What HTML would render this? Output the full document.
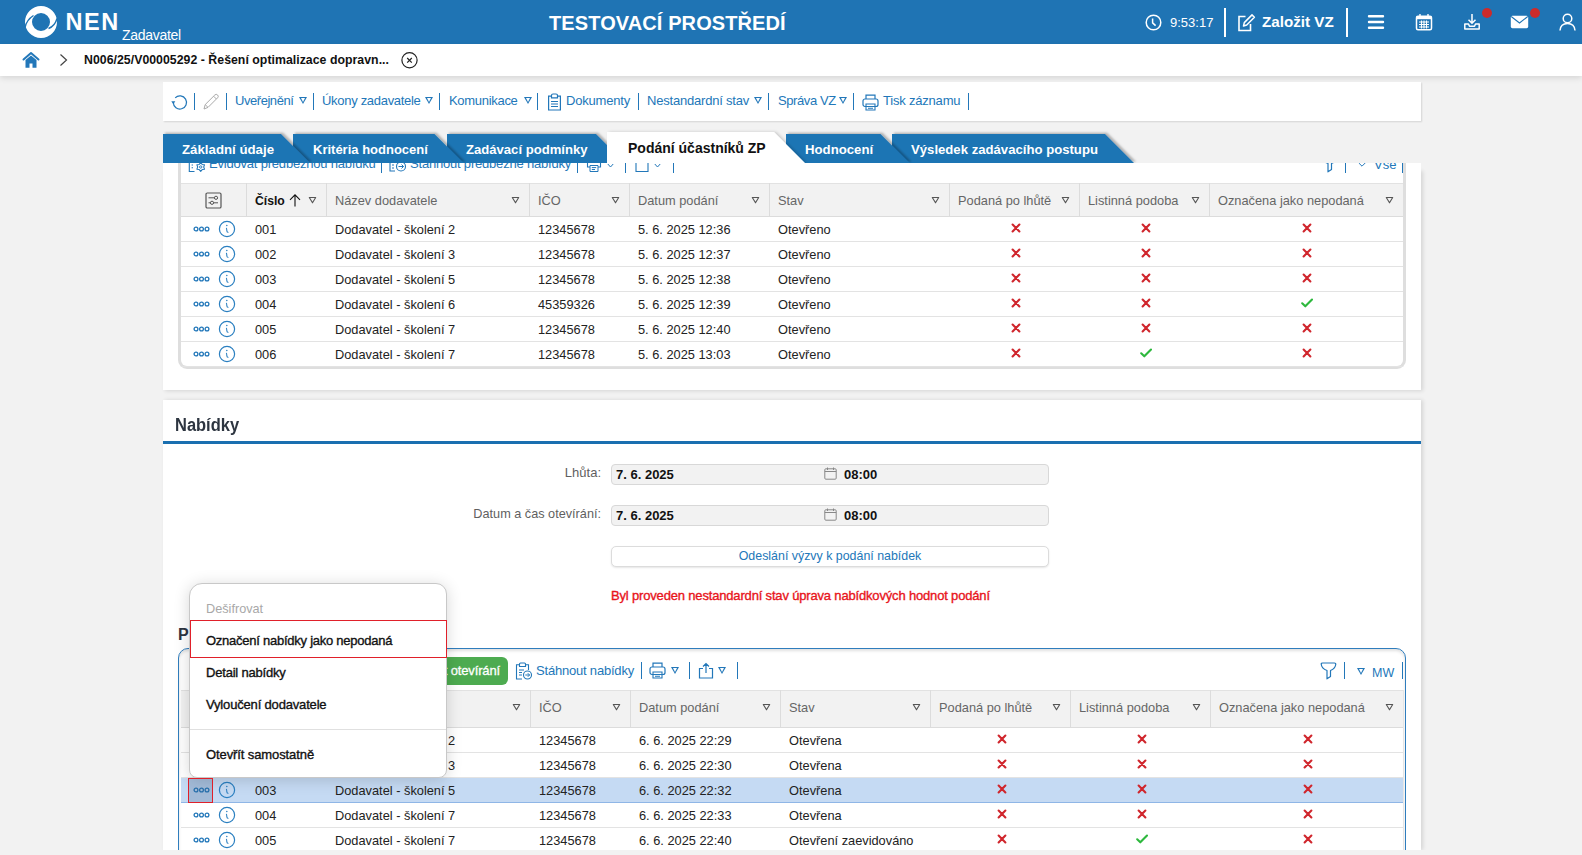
<!DOCTYPE html>
<html><head><meta charset="utf-8">
<style>
*{box-sizing:border-box;margin:0;padding:0}
html,body{width:1582px;height:855px;overflow:hidden;background:#f2f2f2;font-family:"Liberation Sans",sans-serif;color:#222}
.a{position:absolute}
.nw{white-space:nowrap}
#hdr{left:0;top:0;width:1582px;height:44px;background:#1f74b4;color:#fff}
#bc{left:0;top:44px;width:1582px;height:32px;background:#fff;box-shadow:0 2px 6px rgba(0,0,0,.12)}
.panel{background:#fff}
.lnk{color:#2277b9}
.sep{width:1px;background:#2277b9}
.tab{height:29px;top:134px;color:#fff;font-weight:bold;font-size:13.2px;line-height:29px}
.tab svg{position:absolute;left:0;top:0}
.tab span{position:absolute;top:0}
table{border-collapse:collapse}
.inp{width:438px;height:21px;background:#f2f2f2;border:1px solid #d8d8d8;border-radius:4px}
.tri{width:0;height:0;border-left:4px solid transparent;border-right:4px solid transparent;border-top:7px solid #2277b9}
.tri:after{content:"";position:absolute;left:-2.3px;top:-6.1px;border-left:2.3px solid transparent;border-right:2.3px solid transparent;border-top:4px solid #fff}
</style></head><body>

<!-- HEADER -->
<div id="hdr" class="a">
  <svg class="a" style="left:0;top:0" width="70" height="44" viewBox="0 0 70 44">
    <circle cx="41" cy="22" r="12.5" fill="none" stroke="#fff" stroke-width="7"/>
    <path d="M33.5 15.5 Q26.5 20 25 27.5" stroke="#1f74b4" stroke-width="1.4" fill="none"/>
    <path d="M57 18.5 Q55 26 48.5 28.5" stroke="#1f74b4" stroke-width="1.4" fill="none"/>
  </svg>
  <div class="a nw" style="left:65.5px;top:8px;font-size:23.5px;font-weight:bold;letter-spacing:1.6px;line-height:28px">NEN</div>
  <div class="a nw" style="left:122px;top:26.8px;font-size:14px;letter-spacing:-0.3px;line-height:16px">Zadavatel</div>
  <div class="a nw" style="left:549px;top:11px;font-size:20px;font-weight:bold;line-height:24px;letter-spacing:0.1px">TESTOVACÍ PROSTŘEDÍ</div>
  <!-- right side -->
  <svg class="a" style="left:1145px;top:14px" width="17" height="17" viewBox="0 0 17 17"><circle cx="8.5" cy="8.5" r="7.3" fill="none" stroke="#fff" stroke-width="1.5"/><path d="M7.6 4.5 V8.8 L10.6 11.6" fill="none" stroke="#fff" stroke-width="1.5"/></svg>
  <div class="a nw" style="left:1170px;top:15px;font-size:13px;line-height:16px">9:53:17</div>
  <div class="a" style="left:1224px;top:8px;width:2px;height:29px;background:#fff"></div>
  <svg class="a" style="left:1237px;top:13px" width="19" height="19" viewBox="0 0 19 19"><path d="M8.5 3.5 H2 V17.5 H13.5 V11" fill="none" stroke="#fff" stroke-width="1.6"/><path d="M6.5 13 L7.3 9.6 L15 1.9 L17.4 4.3 L9.7 12 Z" fill="none" stroke="#fff" stroke-width="1.5" stroke-linejoin="round"/></svg>
  <div class="a nw" style="left:1262px;top:12px;font-size:15.2px;font-weight:bold;line-height:20px">Založit VZ</div>
  <div class="a" style="left:1346px;top:8px;width:2px;height:29px;background:#fff"></div>
  <svg class="a" style="left:1367px;top:14px" width="18" height="16" viewBox="0 0 18 16"><path d="M2 2.2 H16 M2 8 H16 M2 13.8 H16" stroke="#fff" stroke-width="2.4" stroke-linecap="round"/></svg>
  <svg class="a" style="left:1415px;top:13px" width="18" height="18" viewBox="0 0 18 18"><rect x="1.5" y="3.2" width="15" height="13.6" rx="1.5" fill="none" stroke="#fff" stroke-width="1.5"/><rect x="1.5" y="3.2" width="15" height="3" fill="#fff"/><path d="M5 1 V4.5 M13 1 V4.5" stroke="#fff" stroke-width="1.4"/><path d="M4 9 H14 M4 11.5 H14 M4 14 H14 M6.5 7.5 V15.5 M9 7.5 V15.5 M11.5 7.5 V15.5" stroke="#fff" stroke-width="1.1"/></svg>
  <svg class="a" style="left:1463px;top:13px" width="18" height="18" viewBox="0 0 18 18"><path d="M9 1 V10 M5.5 6.8 L9 10.3 L12.5 6.8" fill="none" stroke="#fff" stroke-width="1.5"/><path d="M1.8 11 V16 H16.2 V11 H12.5 L11.5 13.2 H6.5 L5.5 11 Z" fill="none" stroke="#fff" stroke-width="1.5" stroke-linejoin="round"/></svg>
  <div class="a" style="left:1482px;top:8px;width:10px;height:10px;border-radius:50%;background:#cc2b2b"></div>
  <svg class="a" style="left:1510px;top:15px" width="19" height="14" viewBox="0 0 19 14"><rect x="0.8" y="0.8" width="17.4" height="12.4" rx="1.6" fill="#fff"/><path d="M1.2 1.5 L9.5 8 L17.8 1.5" fill="none" stroke="#1f74b4" stroke-width="1.1"/></svg>
  <div class="a" style="left:1530px;top:8px;width:10px;height:10px;border-radius:50%;background:#cc2b2b"></div>
  <svg class="a" style="left:1559px;top:13px" width="17" height="18" viewBox="0 0 17 18"><circle cx="8.5" cy="5.5" r="4.3" fill="none" stroke="#fff" stroke-width="1.5"/><path d="M1 17.5 Q1.5 10.5 8.5 10.5 Q15.5 10.5 16 17.5" fill="none" stroke="#fff" stroke-width="1.5"/></svg>
</div>

<!-- BREADCRUMB -->
<div id="bc" class="a">
  <svg class="a" style="left:22px;top:7px" width="18" height="18" viewBox="0 0 18 18"><path d="M1.5 8.5 L9 2 L16.5 8.5" fill="none" stroke="#2277b9" stroke-width="2" stroke-linecap="round" stroke-linejoin="round"/><path d="M3.5 9 L9 4.5 L14.5 9 V16.8 H10.5 V12.5 H7.5 V16.8 H3.5 Z" fill="#2277b9"/></svg>
  <svg class="a" style="left:58px;top:9px" width="12" height="14" viewBox="0 0 12 14"><path d="M2.5 1.5 L8.5 7 L2.5 12.5" fill="none" stroke="#444" stroke-width="1.2"/></svg>
  <div class="a nw" style="left:84px;top:7.7px;font-size:12.3px;font-weight:bold;line-height:16px;color:#111;letter-spacing:0.03px">N006/25/V00005292 - Řešení optimalizace dopravn...</div>
  <svg class="a" style="left:400px;top:7px" width="19" height="19" viewBox="0 0 19 19"><circle cx="9.5" cy="9.3" r="7.6" fill="none" stroke="#222" stroke-width="1.2"/><path d="M7.2 7 L11.8 11.6 M11.8 7 L7.2 11.6" stroke="#222" stroke-width="1.2"/></svg>
</div>


<!-- TOOLBAR PANEL -->
<div class="a panel" style="left:163px;top:82px;width:1258px;height:39px;box-shadow:1px 1px 1.5px rgba(0,0,0,.12)">
</div>
<div class="a lnk" style="left:0;top:0;font-size:13px;line-height:16px">
  <svg class="a" style="left:171px;top:94px" width="18" height="17" viewBox="0 0 18 17"><path d="M2.3 8.5 A6.6 6.6 0 1 0 4.2 3.8" fill="none" stroke="#2277b9" stroke-width="1.2"/><path d="M0.3 7.2 L4.3 7.2 L2.3 10.2 Z" fill="#2277b9"/></svg>
  <div class="a sep" style="left:194px;top:93px;height:17px"></div>
  <svg class="a" style="left:202px;top:93px" width="18" height="18" viewBox="0 0 18 18"><path d="M2 16 L3.2 11.6 L12.8 2 A1.6 1.6 0 0 1 15.6 4.8 L6 14.4 Z M3.2 11.6 L6 14.4 M11.6 3.2 L14.4 6" fill="none" stroke="#aaa" stroke-width="1" stroke-linejoin="round"/></svg>
  <div class="a sep" style="left:226px;top:93px;height:17px"></div>
  <div class="a nw" style="left:235px;top:93px;letter-spacing:-0.45px">Uveřejnění</div>
  <div class="a tri" style="left:299px;top:97px"></div>
  <div class="a sep" style="left:313px;top:93px;height:17px"></div>
  <div class="a nw" style="left:322px;top:93px;letter-spacing:-0.3px">Úkony zadavatele</div>
  <div class="a tri" style="left:425px;top:97px"></div>
  <div class="a sep" style="left:439px;top:93px;height:17px"></div>
  <div class="a nw" style="left:449px;top:93px;letter-spacing:-0.3px">Komunikace</div>
  <div class="a tri" style="left:524px;top:97px"></div>
  <div class="a sep" style="left:537px;top:93px;height:17px"></div>
  <svg class="a" style="left:547px;top:93px" width="15" height="18" viewBox="0 0 15 18"><path d="M4.5 3.2 H1.6 V17 H13.4 V3.2 H10.5" fill="none" stroke="#2277b9" stroke-width="1.2"/><path d="M4.5 4.8 V2.5 Q4.5 1 6 1 H9 Q10.5 1 10.5 2.5 V4.8 Z" fill="none" stroke="#2277b9" stroke-width="1.2"/><path d="M4 8.5 H11 M4 11 H11 M4 13.5 H11" stroke="#2277b9" stroke-width="1.2"/></svg>
  <div class="a nw" style="left:566px;top:93px;letter-spacing:-0.2px">Dokumenty</div>
  <div class="a sep" style="left:638px;top:93px;height:17px"></div>
  <div class="a nw" style="left:647px;top:93px;letter-spacing:-0.2px">Nestandardní stav</div>
  <div class="a tri" style="left:754px;top:97px"></div>
  <div class="a sep" style="left:768px;top:93px;height:17px"></div>
  <div class="a nw" style="left:778px;top:93px;letter-spacing:-0.4px">Správa VZ</div>
  <div class="a tri" style="left:839px;top:97px"></div>
  <div class="a sep" style="left:853px;top:93px;height:17px"></div>
  <svg class="a" style="left:862px;top:94px" width="17" height="17" viewBox="0 0 17 17"><path d="M4 5 V1.2 H13 V5" fill="none" stroke="#2277b9" stroke-width="1.2"/><rect x="1" y="5" width="15" height="7.5" rx="2" fill="none" stroke="#2277b9" stroke-width="1.2"/><path d="M4 10 V16 H13 V10 Z M6 12.5 H11 M6 14.3 H11" fill="none" stroke="#2277b9" stroke-width="1.1"/></svg>
  <div class="a nw" style="left:883px;top:93px;letter-spacing:-0.2px">Tisk záznamu</div>
  <div class="a sep" style="left:968px;top:93px;height:17px"></div>
</div>


<!-- UPPER PANEL -->
<div class="a" style="left:163px;top:170px;width:1258px;height:220px;box-shadow:2px 1px 4px rgba(0,0,0,.12)"></div>
<div class="a panel" style="left:163px;top:163px;width:1258px;height:227px;overflow:hidden">
  <div class="a" style="left:15px;top:-20px;width:1228px;height:226px;border:3px solid #dedede;border-top:none;border-radius:0 0 9px 9px"></div>
<div class="a" style="left:18px;top:20px;width:1221.5px;height:34px;background:#f2f2f2;border-bottom:1px solid #dcdcdc;border-top:1px solid #e2e2e2"></div>
<div class="a" style="left:83px;top:20px;width:1px;height:33px;background:#dcdcdc"></div>
<div class="a" style="left:163px;top:20px;width:1px;height:33px;background:#dcdcdc"></div>
<div class="a" style="left:366px;top:20px;width:1px;height:33px;background:#dcdcdc"></div>
<div class="a" style="left:466px;top:20px;width:1px;height:33px;background:#dcdcdc"></div>
<div class="a" style="left:606px;top:20px;width:1px;height:33px;background:#dcdcdc"></div>
<div class="a" style="left:786px;top:20px;width:1px;height:33px;background:#dcdcdc"></div>
<div class="a" style="left:916px;top:20px;width:1px;height:33px;background:#dcdcdc"></div>
<div class="a" style="left:1046px;top:20px;width:1px;height:33px;background:#dcdcdc"></div>
<svg class="a" style="left:42.0px;top:28.5px" width="17" height="17" viewBox="0 0 17 17"><rect x="1" y="1" width="15" height="15" rx="1.3" fill="none" stroke="#555" stroke-width="1.2"/><path d="M3.5 5.8 H13 M3.5 10.8 H13" stroke="#555" stroke-width="1"/><circle cx="11" cy="5.8" r="1.6" fill="#f2f2f2" stroke="#555" stroke-width="1"/><circle cx="7" cy="10.8" r="1.6" fill="#f2f2f2" stroke="#555" stroke-width="1"/></svg>
<div class="a nw" style="left:92px;top:29.5px;font-size:12.2px;color:#111;font-weight:bold;letter-spacing:0px;line-height:16px">Číslo</div><svg class="a" style="left:125px;top:29.5px" width="14" height="14" viewBox="0 0 14 14"><path d="M7 13.5 V1.8 M2 6.8 L7 1.8 L12 6.8" fill="none" stroke="#111" stroke-width="1.1"/></svg><svg class="a" style="left:145px;top:32.5px" width="9" height="8" viewBox="0 0 9 8"><path d="M1.3 1.5 H7.7 L4.5 6.8 Z" fill="none" stroke="#555" stroke-width="1.1" stroke-linejoin="round"/></svg>
<div class="a nw" style="left:172px;top:29.5px;font-size:12.8px;color:#666;font-weight:normal;letter-spacing:0px;line-height:16px">Název dodavatele</div><svg class="a" style="left:348px;top:32.5px" width="9" height="8" viewBox="0 0 9 8"><path d="M1.3 1.5 H7.7 L4.5 6.8 Z" fill="none" stroke="#555" stroke-width="1.1" stroke-linejoin="round"/></svg>
<div class="a nw" style="left:375px;top:29.5px;font-size:12.8px;color:#666;font-weight:normal;letter-spacing:0px;line-height:16px">IČO</div><svg class="a" style="left:448px;top:32.5px" width="9" height="8" viewBox="0 0 9 8"><path d="M1.3 1.5 H7.7 L4.5 6.8 Z" fill="none" stroke="#555" stroke-width="1.1" stroke-linejoin="round"/></svg>
<div class="a nw" style="left:475px;top:29.5px;font-size:12.8px;color:#666;font-weight:normal;letter-spacing:0px;line-height:16px">Datum podání</div><svg class="a" style="left:588px;top:32.5px" width="9" height="8" viewBox="0 0 9 8"><path d="M1.3 1.5 H7.7 L4.5 6.8 Z" fill="none" stroke="#555" stroke-width="1.1" stroke-linejoin="round"/></svg>
<div class="a nw" style="left:615px;top:29.5px;font-size:12.8px;color:#666;font-weight:normal;letter-spacing:0px;line-height:16px">Stav</div><svg class="a" style="left:768px;top:32.5px" width="9" height="8" viewBox="0 0 9 8"><path d="M1.3 1.5 H7.7 L4.5 6.8 Z" fill="none" stroke="#555" stroke-width="1.1" stroke-linejoin="round"/></svg>
<div class="a nw" style="left:795px;top:29.5px;font-size:12.8px;color:#666;font-weight:normal;letter-spacing:0px;line-height:16px">Podaná po lhůtě</div><svg class="a" style="left:898px;top:32.5px" width="9" height="8" viewBox="0 0 9 8"><path d="M1.3 1.5 H7.7 L4.5 6.8 Z" fill="none" stroke="#555" stroke-width="1.1" stroke-linejoin="round"/></svg>
<div class="a nw" style="left:925px;top:29.5px;font-size:12.8px;color:#666;font-weight:normal;letter-spacing:0px;line-height:16px">Listinná podoba</div><svg class="a" style="left:1028px;top:32.5px" width="9" height="8" viewBox="0 0 9 8"><path d="M1.3 1.5 H7.7 L4.5 6.8 Z" fill="none" stroke="#555" stroke-width="1.1" stroke-linejoin="round"/></svg>
<div class="a nw" style="left:1055px;top:29.5px;font-size:12.8px;color:#666;font-weight:normal;letter-spacing:0px;line-height:16px">Označena jako nepodaná</div><svg class="a" style="left:1221.5px;top:32.5px" width="9" height="8" viewBox="0 0 9 8"><path d="M1.3 1.5 H7.7 L4.5 6.8 Z" fill="none" stroke="#555" stroke-width="1.1" stroke-linejoin="round"/></svg>
<div class="a" style="left:18px;top:78px;width:1221.5px;height:1px;background:#e3e3e3"></div>
<svg class="a" style="left:29.5px;top:63.0px" width="17" height="6" viewBox="0 0 17 6"><circle cx="3" cy="3" r="1.9" fill="none" stroke="#2277b9" stroke-width="1.3"/><circle cx="8.5" cy="3" r="1.9" fill="none" stroke="#2277b9" stroke-width="1.3"/><circle cx="14" cy="3" r="1.9" fill="none" stroke="#2277b9" stroke-width="1.3"/></svg>
<svg class="a" style="left:55px;top:57.0px" width="18" height="18" viewBox="0 0 18 18"><circle cx="9" cy="9" r="7.6" fill="none" stroke="#2a7fc0" stroke-width="1.2"/><circle cx="8.8" cy="5.6" r="0.75" fill="#2a7fc0"/><path d="M8 8.1 Q8.9 8.3 8.8 10.5 Q8.7 12.3 10.4 12.5" fill="none" stroke="#2a7fc0" stroke-width="1.1"/></svg>
<div class="a nw" style="left:92px;top:59.0px;font-size:12.8px;color:#222;font-weight:normal;letter-spacing:0px;line-height:16px">001</div>
<div class="a nw" style="left:172px;top:59.0px;font-size:12.8px;color:#222;font-weight:normal;letter-spacing:0px;line-height:16px">Dodavatel - školení 2</div>
<div class="a nw" style="left:375px;top:59.0px;font-size:12.8px;color:#222;font-weight:normal;letter-spacing:0px;line-height:16px">12345678</div>
<div class="a nw" style="left:475px;top:59.0px;font-size:12.8px;color:#222;font-weight:normal;letter-spacing:0px;line-height:16px">5. 6. 2025 12:36</div>
<div class="a nw" style="left:615px;top:59.0px;font-size:12.8px;color:#222;font-weight:normal;letter-spacing:0px;line-height:16px">Otevřeno</div>
<svg class="a" style="left:847.5px;top:60.0px" width="10" height="10" viewBox="0 0 10 10"><path d="M1.6 1.6 L8.4 8.4 M8.4 1.6 L1.6 8.4" stroke="#d0262d" stroke-width="2.1" stroke-linecap="round"/></svg>
<svg class="a" style="left:977.5px;top:60.0px" width="10" height="10" viewBox="0 0 10 10"><path d="M1.6 1.6 L8.4 8.4 M8.4 1.6 L1.6 8.4" stroke="#d0262d" stroke-width="2.1" stroke-linecap="round"/></svg>
<svg class="a" style="left:1139.25px;top:60.0px" width="10" height="10" viewBox="0 0 10 10"><path d="M1.6 1.6 L8.4 8.4 M8.4 1.6 L1.6 8.4" stroke="#d0262d" stroke-width="2.1" stroke-linecap="round"/></svg>
<div class="a" style="left:18px;top:103px;width:1221.5px;height:1px;background:#e3e3e3"></div>
<svg class="a" style="left:29.5px;top:88.0px" width="17" height="6" viewBox="0 0 17 6"><circle cx="3" cy="3" r="1.9" fill="none" stroke="#2277b9" stroke-width="1.3"/><circle cx="8.5" cy="3" r="1.9" fill="none" stroke="#2277b9" stroke-width="1.3"/><circle cx="14" cy="3" r="1.9" fill="none" stroke="#2277b9" stroke-width="1.3"/></svg>
<svg class="a" style="left:55px;top:82.0px" width="18" height="18" viewBox="0 0 18 18"><circle cx="9" cy="9" r="7.6" fill="none" stroke="#2a7fc0" stroke-width="1.2"/><circle cx="8.8" cy="5.6" r="0.75" fill="#2a7fc0"/><path d="M8 8.1 Q8.9 8.3 8.8 10.5 Q8.7 12.3 10.4 12.5" fill="none" stroke="#2a7fc0" stroke-width="1.1"/></svg>
<div class="a nw" style="left:92px;top:84.0px;font-size:12.8px;color:#222;font-weight:normal;letter-spacing:0px;line-height:16px">002</div>
<div class="a nw" style="left:172px;top:84.0px;font-size:12.8px;color:#222;font-weight:normal;letter-spacing:0px;line-height:16px">Dodavatel - školení 3</div>
<div class="a nw" style="left:375px;top:84.0px;font-size:12.8px;color:#222;font-weight:normal;letter-spacing:0px;line-height:16px">12345678</div>
<div class="a nw" style="left:475px;top:84.0px;font-size:12.8px;color:#222;font-weight:normal;letter-spacing:0px;line-height:16px">5. 6. 2025 12:37</div>
<div class="a nw" style="left:615px;top:84.0px;font-size:12.8px;color:#222;font-weight:normal;letter-spacing:0px;line-height:16px">Otevřeno</div>
<svg class="a" style="left:847.5px;top:85.0px" width="10" height="10" viewBox="0 0 10 10"><path d="M1.6 1.6 L8.4 8.4 M8.4 1.6 L1.6 8.4" stroke="#d0262d" stroke-width="2.1" stroke-linecap="round"/></svg>
<svg class="a" style="left:977.5px;top:85.0px" width="10" height="10" viewBox="0 0 10 10"><path d="M1.6 1.6 L8.4 8.4 M8.4 1.6 L1.6 8.4" stroke="#d0262d" stroke-width="2.1" stroke-linecap="round"/></svg>
<svg class="a" style="left:1139.25px;top:85.0px" width="10" height="10" viewBox="0 0 10 10"><path d="M1.6 1.6 L8.4 8.4 M8.4 1.6 L1.6 8.4" stroke="#d0262d" stroke-width="2.1" stroke-linecap="round"/></svg>
<div class="a" style="left:18px;top:128px;width:1221.5px;height:1px;background:#e3e3e3"></div>
<svg class="a" style="left:29.5px;top:113.0px" width="17" height="6" viewBox="0 0 17 6"><circle cx="3" cy="3" r="1.9" fill="none" stroke="#2277b9" stroke-width="1.3"/><circle cx="8.5" cy="3" r="1.9" fill="none" stroke="#2277b9" stroke-width="1.3"/><circle cx="14" cy="3" r="1.9" fill="none" stroke="#2277b9" stroke-width="1.3"/></svg>
<svg class="a" style="left:55px;top:107.0px" width="18" height="18" viewBox="0 0 18 18"><circle cx="9" cy="9" r="7.6" fill="none" stroke="#2a7fc0" stroke-width="1.2"/><circle cx="8.8" cy="5.6" r="0.75" fill="#2a7fc0"/><path d="M8 8.1 Q8.9 8.3 8.8 10.5 Q8.7 12.3 10.4 12.5" fill="none" stroke="#2a7fc0" stroke-width="1.1"/></svg>
<div class="a nw" style="left:92px;top:109.0px;font-size:12.8px;color:#222;font-weight:normal;letter-spacing:0px;line-height:16px">003</div>
<div class="a nw" style="left:172px;top:109.0px;font-size:12.8px;color:#222;font-weight:normal;letter-spacing:0px;line-height:16px">Dodavatel - školení 5</div>
<div class="a nw" style="left:375px;top:109.0px;font-size:12.8px;color:#222;font-weight:normal;letter-spacing:0px;line-height:16px">12345678</div>
<div class="a nw" style="left:475px;top:109.0px;font-size:12.8px;color:#222;font-weight:normal;letter-spacing:0px;line-height:16px">5. 6. 2025 12:38</div>
<div class="a nw" style="left:615px;top:109.0px;font-size:12.8px;color:#222;font-weight:normal;letter-spacing:0px;line-height:16px">Otevřeno</div>
<svg class="a" style="left:847.5px;top:110.0px" width="10" height="10" viewBox="0 0 10 10"><path d="M1.6 1.6 L8.4 8.4 M8.4 1.6 L1.6 8.4" stroke="#d0262d" stroke-width="2.1" stroke-linecap="round"/></svg>
<svg class="a" style="left:977.5px;top:110.0px" width="10" height="10" viewBox="0 0 10 10"><path d="M1.6 1.6 L8.4 8.4 M8.4 1.6 L1.6 8.4" stroke="#d0262d" stroke-width="2.1" stroke-linecap="round"/></svg>
<svg class="a" style="left:1139.25px;top:110.0px" width="10" height="10" viewBox="0 0 10 10"><path d="M1.6 1.6 L8.4 8.4 M8.4 1.6 L1.6 8.4" stroke="#d0262d" stroke-width="2.1" stroke-linecap="round"/></svg>
<div class="a" style="left:18px;top:153px;width:1221.5px;height:1px;background:#e3e3e3"></div>
<svg class="a" style="left:29.5px;top:138.0px" width="17" height="6" viewBox="0 0 17 6"><circle cx="3" cy="3" r="1.9" fill="none" stroke="#2277b9" stroke-width="1.3"/><circle cx="8.5" cy="3" r="1.9" fill="none" stroke="#2277b9" stroke-width="1.3"/><circle cx="14" cy="3" r="1.9" fill="none" stroke="#2277b9" stroke-width="1.3"/></svg>
<svg class="a" style="left:55px;top:132.0px" width="18" height="18" viewBox="0 0 18 18"><circle cx="9" cy="9" r="7.6" fill="none" stroke="#2a7fc0" stroke-width="1.2"/><circle cx="8.8" cy="5.6" r="0.75" fill="#2a7fc0"/><path d="M8 8.1 Q8.9 8.3 8.8 10.5 Q8.7 12.3 10.4 12.5" fill="none" stroke="#2a7fc0" stroke-width="1.1"/></svg>
<div class="a nw" style="left:92px;top:134.0px;font-size:12.8px;color:#222;font-weight:normal;letter-spacing:0px;line-height:16px">004</div>
<div class="a nw" style="left:172px;top:134.0px;font-size:12.8px;color:#222;font-weight:normal;letter-spacing:0px;line-height:16px">Dodavatel - školení 6</div>
<div class="a nw" style="left:375px;top:134.0px;font-size:12.8px;color:#222;font-weight:normal;letter-spacing:0px;line-height:16px">45359326</div>
<div class="a nw" style="left:475px;top:134.0px;font-size:12.8px;color:#222;font-weight:normal;letter-spacing:0px;line-height:16px">5. 6. 2025 12:39</div>
<div class="a nw" style="left:615px;top:134.0px;font-size:12.8px;color:#222;font-weight:normal;letter-spacing:0px;line-height:16px">Otevřeno</div>
<svg class="a" style="left:847.5px;top:135.0px" width="10" height="10" viewBox="0 0 10 10"><path d="M1.6 1.6 L8.4 8.4 M8.4 1.6 L1.6 8.4" stroke="#d0262d" stroke-width="2.1" stroke-linecap="round"/></svg>
<svg class="a" style="left:977.5px;top:135.0px" width="10" height="10" viewBox="0 0 10 10"><path d="M1.6 1.6 L8.4 8.4 M8.4 1.6 L1.6 8.4" stroke="#d0262d" stroke-width="2.1" stroke-linecap="round"/></svg>
<svg class="a" style="left:1138.25px;top:135.0px" width="12" height="10" viewBox="0 0 12 10"><path d="M1.2 5.3 L4.3 8.3 L11 1.5" fill="none" stroke="#2db83d" stroke-width="2.1" stroke-linecap="round" stroke-linejoin="round"/></svg>
<div class="a" style="left:18px;top:178px;width:1221.5px;height:1px;background:#e3e3e3"></div>
<svg class="a" style="left:29.5px;top:163.0px" width="17" height="6" viewBox="0 0 17 6"><circle cx="3" cy="3" r="1.9" fill="none" stroke="#2277b9" stroke-width="1.3"/><circle cx="8.5" cy="3" r="1.9" fill="none" stroke="#2277b9" stroke-width="1.3"/><circle cx="14" cy="3" r="1.9" fill="none" stroke="#2277b9" stroke-width="1.3"/></svg>
<svg class="a" style="left:55px;top:157.0px" width="18" height="18" viewBox="0 0 18 18"><circle cx="9" cy="9" r="7.6" fill="none" stroke="#2a7fc0" stroke-width="1.2"/><circle cx="8.8" cy="5.6" r="0.75" fill="#2a7fc0"/><path d="M8 8.1 Q8.9 8.3 8.8 10.5 Q8.7 12.3 10.4 12.5" fill="none" stroke="#2a7fc0" stroke-width="1.1"/></svg>
<div class="a nw" style="left:92px;top:159.0px;font-size:12.8px;color:#222;font-weight:normal;letter-spacing:0px;line-height:16px">005</div>
<div class="a nw" style="left:172px;top:159.0px;font-size:12.8px;color:#222;font-weight:normal;letter-spacing:0px;line-height:16px">Dodavatel - školení 7</div>
<div class="a nw" style="left:375px;top:159.0px;font-size:12.8px;color:#222;font-weight:normal;letter-spacing:0px;line-height:16px">12345678</div>
<div class="a nw" style="left:475px;top:159.0px;font-size:12.8px;color:#222;font-weight:normal;letter-spacing:0px;line-height:16px">5. 6. 2025 12:40</div>
<div class="a nw" style="left:615px;top:159.0px;font-size:12.8px;color:#222;font-weight:normal;letter-spacing:0px;line-height:16px">Otevřeno</div>
<svg class="a" style="left:847.5px;top:160.0px" width="10" height="10" viewBox="0 0 10 10"><path d="M1.6 1.6 L8.4 8.4 M8.4 1.6 L1.6 8.4" stroke="#d0262d" stroke-width="2.1" stroke-linecap="round"/></svg>
<svg class="a" style="left:977.5px;top:160.0px" width="10" height="10" viewBox="0 0 10 10"><path d="M1.6 1.6 L8.4 8.4 M8.4 1.6 L1.6 8.4" stroke="#d0262d" stroke-width="2.1" stroke-linecap="round"/></svg>
<svg class="a" style="left:1139.25px;top:160.0px" width="10" height="10" viewBox="0 0 10 10"><path d="M1.6 1.6 L8.4 8.4 M8.4 1.6 L1.6 8.4" stroke="#d0262d" stroke-width="2.1" stroke-linecap="round"/></svg>
<div class="a" style="left:18px;top:203px;width:1221.5px;height:1px;background:#e3e3e3"></div>
<svg class="a" style="left:29.5px;top:188.0px" width="17" height="6" viewBox="0 0 17 6"><circle cx="3" cy="3" r="1.9" fill="none" stroke="#2277b9" stroke-width="1.3"/><circle cx="8.5" cy="3" r="1.9" fill="none" stroke="#2277b9" stroke-width="1.3"/><circle cx="14" cy="3" r="1.9" fill="none" stroke="#2277b9" stroke-width="1.3"/></svg>
<svg class="a" style="left:55px;top:182.0px" width="18" height="18" viewBox="0 0 18 18"><circle cx="9" cy="9" r="7.6" fill="none" stroke="#2a7fc0" stroke-width="1.2"/><circle cx="8.8" cy="5.6" r="0.75" fill="#2a7fc0"/><path d="M8 8.1 Q8.9 8.3 8.8 10.5 Q8.7 12.3 10.4 12.5" fill="none" stroke="#2a7fc0" stroke-width="1.1"/></svg>
<div class="a nw" style="left:92px;top:184.0px;font-size:12.8px;color:#222;font-weight:normal;letter-spacing:0px;line-height:16px">006</div>
<div class="a nw" style="left:172px;top:184.0px;font-size:12.8px;color:#222;font-weight:normal;letter-spacing:0px;line-height:16px">Dodavatel - školení 7</div>
<div class="a nw" style="left:375px;top:184.0px;font-size:12.8px;color:#222;font-weight:normal;letter-spacing:0px;line-height:16px">12345678</div>
<div class="a nw" style="left:475px;top:184.0px;font-size:12.8px;color:#222;font-weight:normal;letter-spacing:0px;line-height:16px">5. 6. 2025 13:03</div>
<div class="a nw" style="left:615px;top:184.0px;font-size:12.8px;color:#222;font-weight:normal;letter-spacing:0px;line-height:16px">Otevřeno</div>
<svg class="a" style="left:847.5px;top:185.0px" width="10" height="10" viewBox="0 0 10 10"><path d="M1.6 1.6 L8.4 8.4 M8.4 1.6 L1.6 8.4" stroke="#d0262d" stroke-width="2.1" stroke-linecap="round"/></svg>
<svg class="a" style="left:976.5px;top:185.0px" width="12" height="10" viewBox="0 0 12 10"><path d="M1.2 5.3 L4.3 8.3 L11 1.5" fill="none" stroke="#2db83d" stroke-width="2.1" stroke-linecap="round" stroke-linejoin="round"/></svg>
<svg class="a" style="left:1139.25px;top:185.0px" width="10" height="10" viewBox="0 0 10 10"><path d="M1.6 1.6 L8.4 8.4 M8.4 1.6 L1.6 8.4" stroke="#d0262d" stroke-width="2.1" stroke-linecap="round"/></svg>
  <!-- clipped toolbar -->
  <div class="a lnk" style="left:0;top:0;font-size:13px;line-height:16px">
    <svg class="a" style="left:25px;top:-8px" width="19" height="19" viewBox="0 0 19 19"><path d="M6 3.5 H1.3 V16.5 H6.5" fill="none" stroke="#2277b9" stroke-width="1.1"/><path d="M3.6 10 H5 M3.6 12.8 H5" stroke="#2277b9" stroke-width="1.1"/><polygon points="12.70,7.60 14.20,9.40 16.51,9.80 15.70,12.00 16.51,14.20 14.20,14.60 12.70,16.40 11.20,14.60 8.89,14.20 9.70,12.00 8.89,9.80 11.20,9.40" fill="none" stroke="#2277b9" stroke-width="1.05" stroke-linejoin="round"/><circle cx="12.7" cy="12" r="1.2" fill="none" stroke="#2277b9" stroke-width="0.9"/></svg>
    <div class="a nw" style="left:46px;top:-7.3px;letter-spacing:-0.2px">Evidovat předběžnou nabídku</div>
    <div class="a sep" style="left:218px;top:-2px;height:12px"></div>
    <svg class="a" style="left:226px;top:-6px" width="18" height="16" viewBox="0 0 18 16"><path d="M6 1 H1 V14 H6 M3 5 H5 M3 8 H5 M3 11 H5" fill="none" stroke="#2277b9" stroke-width="1.1"/><circle cx="12" cy="9.5" r="4.5" fill="none" stroke="#2277b9" stroke-width="1.1"/><path d="M9.5 9.5 H14.5 M12.5 7.5 L14.5 9.5 L12.5 11.5" fill="none" stroke="#2277b9" stroke-width="1"/></svg>
    <div class="a nw" style="left:247px;top:-7.3px;letter-spacing:-0.2px">Stáhnout předběžné nabídky</div>
    <div class="a sep" style="left:414px;top:-2px;height:12px"></div>
    <svg class="a" style="left:423px;top:-7px" width="16" height="17" viewBox="0 0 16 17"><path d="M4 11 H1.5 V5 H14.5 V11 H12" fill="none" stroke="#2277b9" stroke-width="1.1"/><path d="M4 9.5 V15.5 H12 V9.5 Z M5.8 11.6 H10.2 M5.8 13.5 H9" fill="none" stroke="#2277b9" stroke-width="1"/></svg>
    <svg class="a" style="left:444px;top:-1px" width="7" height="7" viewBox="0 0 7 7"><path d="M0.8 2 L3.5 5 L6.2 2" fill="none" stroke="#2277b9" stroke-width="1"/></svg>
    <div class="a sep" style="left:462px;top:-2px;height:12px"></div>
    <svg class="a" style="left:472px;top:-7px" width="14" height="17" viewBox="0 0 14 17"><path d="M1 4 V15.5 H13 V4" fill="none" stroke="#2277b9" stroke-width="1.1"/></svg>
    <svg class="a" style="left:491px;top:-1px" width="7" height="7" viewBox="0 0 7 7"><path d="M0.8 2 L3.5 5 L6.2 2" fill="none" stroke="#2277b9" stroke-width="1"/></svg>
    <div class="a sep" style="left:510px;top:-2px;height:12px"></div>
    <svg class="a" style="left:1158px;top:-8px" width="17" height="18" viewBox="0 0 17 18"><path d="M1.2 2 Q1.2 1 2.5 1 H14.5 Q15.8 1 15.8 2 Q15.5 6.5 10.5 8.5 V14.5 L7 16.8 V8.5 Q1.5 6.5 1.2 2 Z" fill="none" stroke="#2277b9" stroke-width="1.2" stroke-linejoin="round"/></svg>
    <div class="a sep" style="left:1182px;top:-2px;height:12px"></div>
    <svg class="a" style="left:1195px;top:-2px" width="8" height="7" viewBox="0 0 8 7"><path d="M0.8 2 L4 5.2 L7.2 2" fill="none" stroke="#2277b9" stroke-width="1"/></svg>
    <div class="a nw" style="left:1211px;top:-6px;font-size:13px">Vše</div>
    <div class="a sep" style="left:1239px;top:-2px;height:12px"></div>
  </div>
</div>

<!-- TABS -->
<svg class="a" style="left:0;top:120px" width="1200" height="43" viewBox="0 120 1200 43">
  <defs><filter id="ta" x="-5%" y="-40%" width="110%" height="180%"><feDropShadow dx="2" dy="0" stdDeviation="1.5" flood-color="#000" flood-opacity="0.18"/></filter><filter id="ts" x="-5%" y="-40%" width="110%" height="180%"><feDropShadow dx="2" dy="-1.2" stdDeviation="1" flood-color="#000" flood-opacity="0.28"/></filter></defs>
  <polygon points="892,134 1105,134 1134,163 892,163" fill="#1f74b4" filter="url(#ts)"/>
  <polygon points="786,134 880.5,134 909.5,163 786,163" fill="#1f74b4" filter="url(#ts)"/>
  <polygon points="447,134 596,134 625,163 447,163" fill="#1f74b4" filter="url(#ts)"/>
  <polygon points="293,134 434.5,134 463.5,163 293,163" fill="#1f74b4" filter="url(#ts)"/>
  <polygon points="163,134 281,134 310,163 163,163" fill="#1f74b4" filter="url(#ts)"/>
  <polygon points="607,132 774,132 805,163 607,163" fill="#fff" filter="url(#ta)"/>
</svg>
<div class="a nw" style="left:182px;top:141.5px;font-size:13.25px;font-weight:bold;color:#fff;line-height:16px">Základní údaje</div>
<div class="a nw" style="left:313px;top:141.5px;font-size:13px;font-weight:bold;color:#fff;line-height:16px">Kritéria hodnocení</div>
<div class="a nw" style="left:466px;top:141.5px;font-size:13.1px;font-weight:bold;color:#fff;line-height:16px">Zadávací podmínky</div>
<div class="a nw" style="left:628px;top:140px;font-size:14px;font-weight:bold;color:#111;line-height:17px">Podání účastníků ZP</div>
<div class="a nw" style="left:805px;top:141.5px;font-size:13.2px;font-weight:bold;color:#fff;line-height:16px">Hodnocení</div>
<div class="a nw" style="left:911px;top:141.5px;font-size:13.15px;font-weight:bold;color:#fff;line-height:16px">Výsledek zadávacího postupu</div>


<!-- NABIDKY PANEL -->
<div class="a panel" style="left:163px;top:400px;width:1258px;height:450px;box-shadow:2px 0 4px rgba(0,0,0,.12);overflow:hidden">
  <div class="a nw" style="left:12px;top:14px;font-size:18px;font-weight:bold;color:#2d3540;line-height:22px;transform:scaleX(0.915);transform-origin:0 0">Nabídky</div>
  <div class="a" style="left:0;top:41px;width:1258px;height:3px;background:#1a6fb0"></div>
  <div class="a nw" style="left:0;top:65px;width:438px;text-align:right;font-size:13px;color:#5f5f5f;line-height:16px">Lhůta:</div>
  <div class="a nw" style="left:0;top:106px;width:438px;text-align:right;font-size:12.7px;color:#5f5f5f;line-height:16px">Datum a čas otevírání:</div>
  <div class="a inp" style="left:448px;top:64px"></div>
  <div class="a inp" style="left:448px;top:105px"></div>
  <div class="a nw" style="left:453px;top:67px;font-size:13px;color:#111;font-weight:bold;letter-spacing:0px;line-height:16px">7. 6. 2025</div><svg class="a" style="left:661px;top:67px" width="13" height="13" viewBox="0 0 13 13"><rect x="0.8" y="1.8" width="11.4" height="10.4" rx="1" fill="none" stroke="#888" stroke-width="1"/><path d="M0.8 4.5 H12.2 M3.5 0.5 V3 M9.5 0.5 V3" stroke="#888" stroke-width="1"/></svg><div class="a nw" style="left:681px;top:67px;font-size:13px;color:#111;font-weight:bold;letter-spacing:0px;line-height:16px">08:00</div><div class="a nw" style="left:453px;top:108px;font-size:13px;color:#111;font-weight:bold;letter-spacing:0px;line-height:16px">7. 6. 2025</div><svg class="a" style="left:661px;top:108px" width="13" height="13" viewBox="0 0 13 13"><rect x="0.8" y="1.8" width="11.4" height="10.4" rx="1" fill="none" stroke="#888" stroke-width="1"/><path d="M0.8 4.5 H12.2 M3.5 0.5 V3 M9.5 0.5 V3" stroke="#888" stroke-width="1"/></svg><div class="a nw" style="left:681px;top:108px;font-size:13px;color:#111;font-weight:bold;letter-spacing:0px;line-height:16px">08:00</div>
  <div class="a" style="left:448px;top:146px;width:438px;height:21px;border:1px solid #dcdcdc;border-radius:5px;box-shadow:0 1px 2px rgba(0,0,0,.1);background:#fff"></div>
  <div class="a nw lnk" style="left:448px;top:148px;width:438px;text-align:center;font-size:12.4px;line-height:16px">Odeslání výzvy k podání nabídek</div>
  <div class="a nw" style="left:448px;top:188px;font-size:13px;color:#e8141b;line-height:16px;-webkit-text-stroke:0.35px #e8141b;letter-spacing:-0.17px">Byl proveden nestandardní stav úprava nabídkových hodnot podání</div>
  <div class="a nw" style="left:15px;top:225px;font-size:16px;font-weight:bold;color:#2d3540;line-height:20px">P</div>
  <!-- lower table frame -->
  <div class="a" style="left:15px;top:248px;width:1228px;height:230px;border:1.3px solid #2f7dbd;border-radius:10px 10px 0 0;box-shadow:inset 0 2px 3px rgba(0,0,0,.12)"></div>
  <div class="a" style="left:18px;top:290px;width:1221.5px;height:38px;background:#f2f2f2;border-bottom:1px solid #dcdcdc;border-top:1px solid #e2e2e2"></div>
<div class="a" style="left:83px;top:290px;width:1px;height:37px;background:#dcdcdc"></div>
<div class="a" style="left:163px;top:290px;width:1px;height:37px;background:#dcdcdc"></div>
<div class="a" style="left:367px;top:290px;width:1px;height:37px;background:#dcdcdc"></div>
<div class="a" style="left:467px;top:290px;width:1px;height:37px;background:#dcdcdc"></div>
<div class="a" style="left:617px;top:290px;width:1px;height:37px;background:#dcdcdc"></div>
<div class="a" style="left:767px;top:290px;width:1px;height:37px;background:#dcdcdc"></div>
<div class="a" style="left:907px;top:290px;width:1px;height:37px;background:#dcdcdc"></div>
<div class="a" style="left:1047px;top:290px;width:1px;height:37px;background:#dcdcdc"></div>
<svg class="a" style="left:42.0px;top:299.0px" width="17" height="17" viewBox="0 0 17 17"><rect x="1" y="1" width="15" height="15" rx="1.3" fill="none" stroke="#555" stroke-width="1.2"/><path d="M3.5 5.8 H13 M3.5 10.8 H13" stroke="#555" stroke-width="1"/><circle cx="11" cy="5.8" r="1.6" fill="#f2f2f2" stroke="#555" stroke-width="1"/><circle cx="7" cy="10.8" r="1.6" fill="#f2f2f2" stroke="#555" stroke-width="1"/></svg>
<div class="a nw" style="left:92px;top:300.0px;font-size:12.2px;color:#111;font-weight:bold;letter-spacing:0px;line-height:16px">Číslo</div><svg class="a" style="left:125px;top:300.0px" width="14" height="14" viewBox="0 0 14 14"><path d="M7 13.5 V1.8 M2 6.8 L7 1.8 L12 6.8" fill="none" stroke="#111" stroke-width="1.1"/></svg><svg class="a" style="left:145px;top:303.0px" width="9" height="8" viewBox="0 0 9 8"><path d="M1.3 1.5 H7.7 L4.5 6.8 Z" fill="none" stroke="#555" stroke-width="1.1" stroke-linejoin="round"/></svg>
<div class="a nw" style="left:172px;top:300.0px;font-size:12.8px;color:#666;font-weight:normal;letter-spacing:0px;line-height:16px">Název dodavatele</div><svg class="a" style="left:349px;top:303.0px" width="9" height="8" viewBox="0 0 9 8"><path d="M1.3 1.5 H7.7 L4.5 6.8 Z" fill="none" stroke="#555" stroke-width="1.1" stroke-linejoin="round"/></svg>
<div class="a nw" style="left:376px;top:300.0px;font-size:12.8px;color:#666;font-weight:normal;letter-spacing:0px;line-height:16px">IČO</div><svg class="a" style="left:449px;top:303.0px" width="9" height="8" viewBox="0 0 9 8"><path d="M1.3 1.5 H7.7 L4.5 6.8 Z" fill="none" stroke="#555" stroke-width="1.1" stroke-linejoin="round"/></svg>
<div class="a nw" style="left:476px;top:300.0px;font-size:12.8px;color:#666;font-weight:normal;letter-spacing:0px;line-height:16px">Datum podání</div><svg class="a" style="left:599px;top:303.0px" width="9" height="8" viewBox="0 0 9 8"><path d="M1.3 1.5 H7.7 L4.5 6.8 Z" fill="none" stroke="#555" stroke-width="1.1" stroke-linejoin="round"/></svg>
<div class="a nw" style="left:626px;top:300.0px;font-size:12.8px;color:#666;font-weight:normal;letter-spacing:0px;line-height:16px">Stav</div><svg class="a" style="left:749px;top:303.0px" width="9" height="8" viewBox="0 0 9 8"><path d="M1.3 1.5 H7.7 L4.5 6.8 Z" fill="none" stroke="#555" stroke-width="1.1" stroke-linejoin="round"/></svg>
<div class="a nw" style="left:776px;top:300.0px;font-size:12.8px;color:#666;font-weight:normal;letter-spacing:0px;line-height:16px">Podaná po lhůtě</div><svg class="a" style="left:889px;top:303.0px" width="9" height="8" viewBox="0 0 9 8"><path d="M1.3 1.5 H7.7 L4.5 6.8 Z" fill="none" stroke="#555" stroke-width="1.1" stroke-linejoin="round"/></svg>
<div class="a nw" style="left:916px;top:300.0px;font-size:12.8px;color:#666;font-weight:normal;letter-spacing:0px;line-height:16px">Listinná podoba</div><svg class="a" style="left:1029px;top:303.0px" width="9" height="8" viewBox="0 0 9 8"><path d="M1.3 1.5 H7.7 L4.5 6.8 Z" fill="none" stroke="#555" stroke-width="1.1" stroke-linejoin="round"/></svg>
<div class="a nw" style="left:1056px;top:300.0px;font-size:12.8px;color:#666;font-weight:normal;letter-spacing:0px;line-height:16px">Označena jako nepodaná</div><svg class="a" style="left:1221.5px;top:303.0px" width="9" height="8" viewBox="0 0 9 8"><path d="M1.3 1.5 H7.7 L4.5 6.8 Z" fill="none" stroke="#555" stroke-width="1.1" stroke-linejoin="round"/></svg>
<div class="a" style="left:18px;top:352px;width:1221.5px;height:1px;background:#e3e3e3"></div>
<svg class="a" style="left:29.5px;top:337.0px" width="17" height="6" viewBox="0 0 17 6"><circle cx="3" cy="3" r="1.9" fill="none" stroke="#2277b9" stroke-width="1.3"/><circle cx="8.5" cy="3" r="1.9" fill="none" stroke="#2277b9" stroke-width="1.3"/><circle cx="14" cy="3" r="1.9" fill="none" stroke="#2277b9" stroke-width="1.3"/></svg>
<svg class="a" style="left:55px;top:331.0px" width="18" height="18" viewBox="0 0 18 18"><circle cx="9" cy="9" r="7.6" fill="none" stroke="#2a7fc0" stroke-width="1.2"/><circle cx="8.8" cy="5.6" r="0.75" fill="#2a7fc0"/><path d="M8 8.1 Q8.9 8.3 8.8 10.5 Q8.7 12.3 10.4 12.5" fill="none" stroke="#2a7fc0" stroke-width="1.1"/></svg>
<div class="a nw" style="left:92px;top:333.0px;font-size:12.8px;color:#222;font-weight:normal;letter-spacing:0px;line-height:16px">001</div>
<div class="a nw" style="left:172px;top:333.0px;font-size:12.8px;color:#222;font-weight:normal;letter-spacing:0px;line-height:16px">Dodavatel - školení 2</div>
<div class="a nw" style="left:376px;top:333.0px;font-size:12.8px;color:#222;font-weight:normal;letter-spacing:0px;line-height:16px">12345678</div>
<div class="a nw" style="left:476px;top:333.0px;font-size:12.8px;color:#222;font-weight:normal;letter-spacing:0px;line-height:16px">6. 6. 2025 22:29</div>
<div class="a nw" style="left:626px;top:333.0px;font-size:12.8px;color:#222;font-weight:normal;letter-spacing:0px;line-height:16px">Otevřena</div>
<svg class="a" style="left:833.5px;top:334.0px" width="10" height="10" viewBox="0 0 10 10"><path d="M1.6 1.6 L8.4 8.4 M8.4 1.6 L1.6 8.4" stroke="#d0262d" stroke-width="2.1" stroke-linecap="round"/></svg>
<svg class="a" style="left:973.5px;top:334.0px" width="10" height="10" viewBox="0 0 10 10"><path d="M1.6 1.6 L8.4 8.4 M8.4 1.6 L1.6 8.4" stroke="#d0262d" stroke-width="2.1" stroke-linecap="round"/></svg>
<svg class="a" style="left:1139.75px;top:334.0px" width="10" height="10" viewBox="0 0 10 10"><path d="M1.6 1.6 L8.4 8.4 M8.4 1.6 L1.6 8.4" stroke="#d0262d" stroke-width="2.1" stroke-linecap="round"/></svg>
<div class="a" style="left:18px;top:377px;width:1221.5px;height:1px;background:#e3e3e3"></div>
<svg class="a" style="left:29.5px;top:362.0px" width="17" height="6" viewBox="0 0 17 6"><circle cx="3" cy="3" r="1.9" fill="none" stroke="#2277b9" stroke-width="1.3"/><circle cx="8.5" cy="3" r="1.9" fill="none" stroke="#2277b9" stroke-width="1.3"/><circle cx="14" cy="3" r="1.9" fill="none" stroke="#2277b9" stroke-width="1.3"/></svg>
<svg class="a" style="left:55px;top:356.0px" width="18" height="18" viewBox="0 0 18 18"><circle cx="9" cy="9" r="7.6" fill="none" stroke="#2a7fc0" stroke-width="1.2"/><circle cx="8.8" cy="5.6" r="0.75" fill="#2a7fc0"/><path d="M8 8.1 Q8.9 8.3 8.8 10.5 Q8.7 12.3 10.4 12.5" fill="none" stroke="#2a7fc0" stroke-width="1.1"/></svg>
<div class="a nw" style="left:92px;top:358.0px;font-size:12.8px;color:#222;font-weight:normal;letter-spacing:0px;line-height:16px">002</div>
<div class="a nw" style="left:172px;top:358.0px;font-size:12.8px;color:#222;font-weight:normal;letter-spacing:0px;line-height:16px">Dodavatel - školení 3</div>
<div class="a nw" style="left:376px;top:358.0px;font-size:12.8px;color:#222;font-weight:normal;letter-spacing:0px;line-height:16px">12345678</div>
<div class="a nw" style="left:476px;top:358.0px;font-size:12.8px;color:#222;font-weight:normal;letter-spacing:0px;line-height:16px">6. 6. 2025 22:30</div>
<div class="a nw" style="left:626px;top:358.0px;font-size:12.8px;color:#222;font-weight:normal;letter-spacing:0px;line-height:16px">Otevřena</div>
<svg class="a" style="left:833.5px;top:359.0px" width="10" height="10" viewBox="0 0 10 10"><path d="M1.6 1.6 L8.4 8.4 M8.4 1.6 L1.6 8.4" stroke="#d0262d" stroke-width="2.1" stroke-linecap="round"/></svg>
<svg class="a" style="left:973.5px;top:359.0px" width="10" height="10" viewBox="0 0 10 10"><path d="M1.6 1.6 L8.4 8.4 M8.4 1.6 L1.6 8.4" stroke="#d0262d" stroke-width="2.1" stroke-linecap="round"/></svg>
<svg class="a" style="left:1139.75px;top:359.0px" width="10" height="10" viewBox="0 0 10 10"><path d="M1.6 1.6 L8.4 8.4 M8.4 1.6 L1.6 8.4" stroke="#d0262d" stroke-width="2.1" stroke-linecap="round"/></svg>
<div class="a" style="left:18px;top:378px;width:1221.5px;height:25px;background:#c5daf3;border-bottom:1px solid #8fb6e6"></div>
<svg class="a" style="left:29.5px;top:387.0px" width="17" height="6" viewBox="0 0 17 6"><circle cx="3" cy="3" r="1.9" fill="none" stroke="#2277b9" stroke-width="1.3"/><circle cx="8.5" cy="3" r="1.9" fill="none" stroke="#2277b9" stroke-width="1.3"/><circle cx="14" cy="3" r="1.9" fill="none" stroke="#2277b9" stroke-width="1.3"/></svg>
<svg class="a" style="left:55px;top:381.0px" width="18" height="18" viewBox="0 0 18 18"><circle cx="9" cy="9" r="7.6" fill="none" stroke="#2a7fc0" stroke-width="1.2"/><circle cx="8.8" cy="5.6" r="0.75" fill="#2a7fc0"/><path d="M8 8.1 Q8.9 8.3 8.8 10.5 Q8.7 12.3 10.4 12.5" fill="none" stroke="#2a7fc0" stroke-width="1.1"/></svg>
<div class="a nw" style="left:92px;top:383.0px;font-size:12.8px;color:#222;font-weight:normal;letter-spacing:0px;line-height:16px">003</div>
<div class="a nw" style="left:172px;top:383.0px;font-size:12.8px;color:#222;font-weight:normal;letter-spacing:0px;line-height:16px">Dodavatel - školení 5</div>
<div class="a nw" style="left:376px;top:383.0px;font-size:12.8px;color:#222;font-weight:normal;letter-spacing:0px;line-height:16px">12345678</div>
<div class="a nw" style="left:476px;top:383.0px;font-size:12.8px;color:#222;font-weight:normal;letter-spacing:0px;line-height:16px">6. 6. 2025 22:32</div>
<div class="a nw" style="left:626px;top:383.0px;font-size:12.8px;color:#222;font-weight:normal;letter-spacing:0px;line-height:16px">Otevřena</div>
<svg class="a" style="left:833.5px;top:384.0px" width="10" height="10" viewBox="0 0 10 10"><path d="M1.6 1.6 L8.4 8.4 M8.4 1.6 L1.6 8.4" stroke="#d0262d" stroke-width="2.1" stroke-linecap="round"/></svg>
<svg class="a" style="left:973.5px;top:384.0px" width="10" height="10" viewBox="0 0 10 10"><path d="M1.6 1.6 L8.4 8.4 M8.4 1.6 L1.6 8.4" stroke="#d0262d" stroke-width="2.1" stroke-linecap="round"/></svg>
<svg class="a" style="left:1139.75px;top:384.0px" width="10" height="10" viewBox="0 0 10 10"><path d="M1.6 1.6 L8.4 8.4 M8.4 1.6 L1.6 8.4" stroke="#d0262d" stroke-width="2.1" stroke-linecap="round"/></svg>
<div class="a" style="left:18px;top:427px;width:1221.5px;height:1px;background:#e3e3e3"></div>
<svg class="a" style="left:29.5px;top:412.0px" width="17" height="6" viewBox="0 0 17 6"><circle cx="3" cy="3" r="1.9" fill="none" stroke="#2277b9" stroke-width="1.3"/><circle cx="8.5" cy="3" r="1.9" fill="none" stroke="#2277b9" stroke-width="1.3"/><circle cx="14" cy="3" r="1.9" fill="none" stroke="#2277b9" stroke-width="1.3"/></svg>
<svg class="a" style="left:55px;top:406.0px" width="18" height="18" viewBox="0 0 18 18"><circle cx="9" cy="9" r="7.6" fill="none" stroke="#2a7fc0" stroke-width="1.2"/><circle cx="8.8" cy="5.6" r="0.75" fill="#2a7fc0"/><path d="M8 8.1 Q8.9 8.3 8.8 10.5 Q8.7 12.3 10.4 12.5" fill="none" stroke="#2a7fc0" stroke-width="1.1"/></svg>
<div class="a nw" style="left:92px;top:408.0px;font-size:12.8px;color:#222;font-weight:normal;letter-spacing:0px;line-height:16px">004</div>
<div class="a nw" style="left:172px;top:408.0px;font-size:12.8px;color:#222;font-weight:normal;letter-spacing:0px;line-height:16px">Dodavatel - školení 7</div>
<div class="a nw" style="left:376px;top:408.0px;font-size:12.8px;color:#222;font-weight:normal;letter-spacing:0px;line-height:16px">12345678</div>
<div class="a nw" style="left:476px;top:408.0px;font-size:12.8px;color:#222;font-weight:normal;letter-spacing:0px;line-height:16px">6. 6. 2025 22:33</div>
<div class="a nw" style="left:626px;top:408.0px;font-size:12.8px;color:#222;font-weight:normal;letter-spacing:0px;line-height:16px">Otevřena</div>
<svg class="a" style="left:833.5px;top:409.0px" width="10" height="10" viewBox="0 0 10 10"><path d="M1.6 1.6 L8.4 8.4 M8.4 1.6 L1.6 8.4" stroke="#d0262d" stroke-width="2.1" stroke-linecap="round"/></svg>
<svg class="a" style="left:973.5px;top:409.0px" width="10" height="10" viewBox="0 0 10 10"><path d="M1.6 1.6 L8.4 8.4 M8.4 1.6 L1.6 8.4" stroke="#d0262d" stroke-width="2.1" stroke-linecap="round"/></svg>
<svg class="a" style="left:1139.75px;top:409.0px" width="10" height="10" viewBox="0 0 10 10"><path d="M1.6 1.6 L8.4 8.4 M8.4 1.6 L1.6 8.4" stroke="#d0262d" stroke-width="2.1" stroke-linecap="round"/></svg>
<div class="a" style="left:18px;top:452px;width:1221.5px;height:1px;background:#e3e3e3"></div>
<svg class="a" style="left:29.5px;top:437.0px" width="17" height="6" viewBox="0 0 17 6"><circle cx="3" cy="3" r="1.9" fill="none" stroke="#2277b9" stroke-width="1.3"/><circle cx="8.5" cy="3" r="1.9" fill="none" stroke="#2277b9" stroke-width="1.3"/><circle cx="14" cy="3" r="1.9" fill="none" stroke="#2277b9" stroke-width="1.3"/></svg>
<svg class="a" style="left:55px;top:431.0px" width="18" height="18" viewBox="0 0 18 18"><circle cx="9" cy="9" r="7.6" fill="none" stroke="#2a7fc0" stroke-width="1.2"/><circle cx="8.8" cy="5.6" r="0.75" fill="#2a7fc0"/><path d="M8 8.1 Q8.9 8.3 8.8 10.5 Q8.7 12.3 10.4 12.5" fill="none" stroke="#2a7fc0" stroke-width="1.1"/></svg>
<div class="a nw" style="left:92px;top:433.0px;font-size:12.8px;color:#222;font-weight:normal;letter-spacing:0px;line-height:16px">005</div>
<div class="a nw" style="left:172px;top:433.0px;font-size:12.8px;color:#222;font-weight:normal;letter-spacing:0px;line-height:16px">Dodavatel - školení 7</div>
<div class="a nw" style="left:376px;top:433.0px;font-size:12.8px;color:#222;font-weight:normal;letter-spacing:0px;line-height:16px">12345678</div>
<div class="a nw" style="left:476px;top:433.0px;font-size:12.8px;color:#222;font-weight:normal;letter-spacing:0px;line-height:16px">6. 6. 2025 22:40</div>
<div class="a nw" style="left:626px;top:433.0px;font-size:12.8px;color:#222;font-weight:normal;letter-spacing:0px;line-height:16px">Otevření zaevidováno</div>
<svg class="a" style="left:833.5px;top:434.0px" width="10" height="10" viewBox="0 0 10 10"><path d="M1.6 1.6 L8.4 8.4 M8.4 1.6 L1.6 8.4" stroke="#d0262d" stroke-width="2.1" stroke-linecap="round"/></svg>
<svg class="a" style="left:972.5px;top:434.0px" width="12" height="10" viewBox="0 0 12 10"><path d="M1.2 5.3 L4.3 8.3 L11 1.5" fill="none" stroke="#2db83d" stroke-width="2.1" stroke-linecap="round" stroke-linejoin="round"/></svg>
<svg class="a" style="left:1139.75px;top:434.0px" width="10" height="10" viewBox="0 0 10 10"><path d="M1.6 1.6 L8.4 8.4 M8.4 1.6 L1.6 8.4" stroke="#d0262d" stroke-width="2.1" stroke-linecap="round"/></svg>
  <div class="a" style="left:1239.5px;top:290px;width:1px;height:170px;background:#e6e6e6"></div>
  <!-- lower toolbar -->
  <div class="a" style="left:240px;top:257px;width:105px;height:28px;background:#4dab50;border-radius:6px"></div>
  <div class="a nw" style="left:137px;top:262.5px;width:200px;text-align:right;font-size:13px;color:#fff;line-height:16px;letter-spacing:-0.15px;-webkit-text-stroke:0.3px #fff">Nastavit otevírání</div>
  <svg class="a" style="left:352px;top:262px" width="18" height="18" viewBox="0 0 18 18"><path d="M4.5 2.8 H1.5 V17 H7 M10.5 2.8 H13.5 V8" fill="none" stroke="#2277b9" stroke-width="1.1"/><path d="M4.5 4.5 V2 Q4.5 1 5.5 1 H9.5 Q10.5 1 10.5 2 V4.5 Z" fill="none" stroke="#2277b9" stroke-width="1.1"/><path d="M4 8 H9 M4 10.5 H7 M4 13 H7" stroke="#2277b9" stroke-width="1.1"/><circle cx="12.5" cy="13" r="4" fill="#fff" stroke="#2277b9" stroke-width="1.1"/><path d="M10.3 13 H14.6 M12.8 11.2 L14.6 13 L12.8 14.8" fill="none" stroke="#2277b9" stroke-width="1"/></svg>
  <div class="a nw lnk" style="left:373px;top:263px;font-size:13px;letter-spacing:-0.2px;line-height:16px">Stáhnout nabídky</div>
  <div class="a sep" style="left:478px;top:262px;height:17px"></div>
  <svg class="a" style="left:486px;top:262px" width="17" height="17" viewBox="0 0 17 17"><path d="M4 5 V1.2 H13 V5" fill="none" stroke="#2277b9" stroke-width="1.2"/><rect x="1" y="5" width="15" height="7.5" rx="2" fill="none" stroke="#2277b9" stroke-width="1.2"/><path d="M4 10 V16 H13 V10 Z M6 12.5 H11 M6 14.3 H11" fill="none" stroke="#2277b9" stroke-width="1.1"/></svg>
  <div class="a tri" style="left:508px;top:267px"></div>
  <div class="a sep" style="left:526px;top:262px;height:17px"></div>
  <svg class="a" style="left:535px;top:262px" width="16" height="17" viewBox="0 0 16 17"><path d="M5 6.5 H1.5 V16 H14.5 V6.5 H11 M8 11 V1.5 M5 4.5 L8 1.5 L11 4.5" fill="none" stroke="#2277b9" stroke-width="1.2"/></svg>
  <div class="a tri" style="left:555px;top:267px"></div>
  <div class="a sep" style="left:574px;top:262px;height:17px"></div>
  <svg class="a" style="left:1157px;top:262px" width="17" height="18" viewBox="0 0 17 18"><path d="M1.2 2 Q1.2 1 2.5 1 H14.5 Q15.8 1 15.8 2 Q15.5 6.5 10.5 8.5 V14.5 L7 16.8 V8.5 Q1.5 6.5 1.2 2 Z" fill="none" stroke="#2277b9" stroke-width="1.2" stroke-linejoin="round"/></svg>
  <div class="a sep" style="left:1181px;top:262px;height:17px"></div>
  <div class="a tri" style="left:1194px;top:268px"></div>
  <div class="a nw lnk" style="left:1209px;top:265px;font-size:12.5px;line-height:16px">MW</div>
  <div class="a sep" style="left:1239px;top:262px;height:17px"></div>
</div>
<div class="a" style="left:0;top:850px;width:1582px;height:5px;background:#f2f2f2"></div>

<div class="a" style="left:189px;top:583px;width:258px;height:195px;background:#fff;border:1px solid #c8c8c8;border-radius:13px 11px 8px 8px;box-shadow:0 2px 16px rgba(0,0,0,.16)">
</div>
<div class="a nw" style="left:206px;top:601px;font-size:12.7px;color:#a8a8a8;line-height:16px">Dešifrovat</div>
<div class="a" style="left:190px;top:620px;width:257px;height:38px;border:1.5px solid #e0202a"></div>
<div class="a nw" style="left:206px;top:633px;font-size:13px;color:#111;line-height:16px;-webkit-text-stroke:0.35px #111;letter-spacing:-0.25px">Označení nabídky jako nepodaná</div>
<div class="a nw" style="left:206px;top:665px;font-size:13px;color:#111;line-height:16px;-webkit-text-stroke:0.35px #111;letter-spacing:-0.2px">Detail nabídky</div>
<div class="a nw" style="left:206px;top:697px;font-size:13px;color:#111;line-height:16px;-webkit-text-stroke:0.35px #111;letter-spacing:-0.17px">Vyloučení dodavatele</div>
<div class="a" style="left:190px;top:729px;width:256px;height:1px;background:#e0e0e0"></div>
<div class="a nw" style="left:206px;top:747px;font-size:13px;color:#111;line-height:16px;-webkit-text-stroke:0.35px #111;letter-spacing:-0.1px">Otevřít samostatně</div>
<div class="a" style="left:188px;top:778px;width:25px;height:25px;border:1.5px solid #e0202a;background:rgba(60,90,130,.25)"></div>


</body></html>
